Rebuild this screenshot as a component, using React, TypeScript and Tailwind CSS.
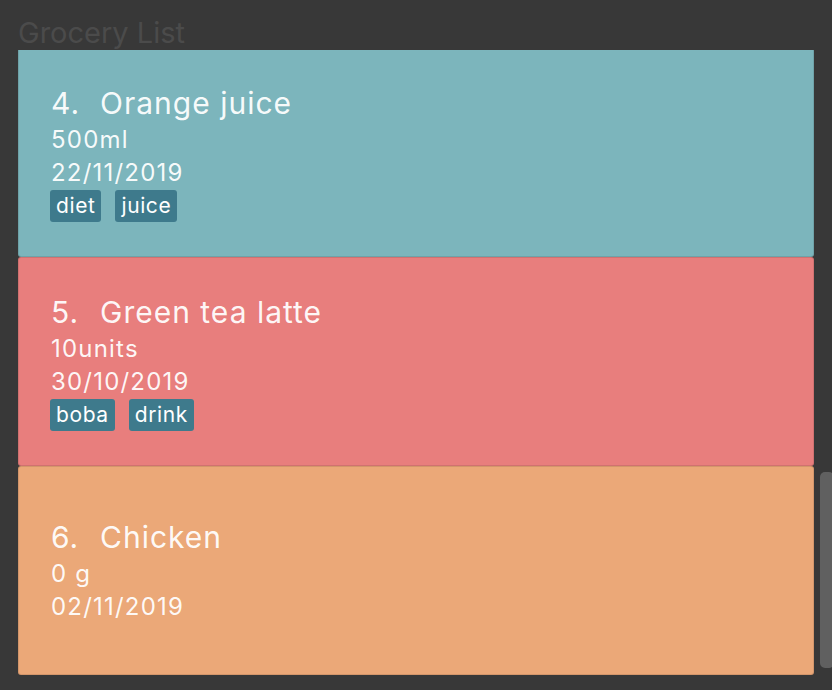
import React from "react";

type Item = {
  n: number;
  name: string;
  qty: string;
  date: string;
  tags: string[];
  bg: string;
};

const items: Item[] = [
  { n: 4, name: "Orange juice", qty: "500ml", date: "22/11/2019", tags: ["diet", "juice"], bg: "bg-[#7cb5bc]" },
  { n: 5, name: "Green tea latte", qty: "10units", date: "30/10/2019", tags: ["boba", "drink"], bg: "bg-[#e87e7d]" },
  { n: 6, name: "Chicken", qty: "0 g", date: "02/11/2019", tags: [], bg: "bg-[#eba878]" },
];

function Card({ it }: { it: Item }) {
  return (
    <div
      className={`${it.bg} h-[209px] shrink-0 rounded-[3px] border border-black/10 flex flex-col justify-center pl-[32px] text-white/95`}
    >
      <div className="flex text-[30px] leading-[39px] tracking-[1px]">
        <span className="w-[49px]">{it.n}.</span>
        <span>{it.name}</span>
      </div>
      <div className="text-[24px] leading-[33px] tracking-[1.2px]">{it.qty}</div>
      <div className="text-[24px] leading-[33px] tracking-[1.2px]">{it.date}</div>
      {it.tags.length > 0 && (
        <div className="flex gap-[14px] mt-[1px] -ml-[1px]">
          {it.tags.map((t) => (
            <span
              key={t}
              className="h-[32px] px-[6px] rounded-[3px] bg-[#3e7a8c] text-white text-[21px] leading-[32px] tracking-[0.6px]"
            >
              {t}
            </span>
          ))}
        </div>
      )}
    </div>
  );
}

export default function App() {
  return (
    <div
      className="w-[832px] h-[690px] overflow-hidden bg-[#383838] flex"
      style={{ fontFamily: "Inter, 'Noto Sans', sans-serif" }}
    >
      <div className="w-[796px] shrink-0 ml-[18px] pt-[19px] flex flex-col">
        <div className="h-[31px] overflow-hidden text-[29px] leading-[28px] text-[#4b4b4b]">
          Grocery List
        </div>
        <div className="h-[625px] overflow-hidden">
          <div className="-mt-[2px] flex flex-col">
            {items.map((it) => (
              <Card key={it.n} it={it} />
            ))}
          </div>
        </div>
      </div>
      <div className="ml-[6px] w-[12px] shrink-0 pt-[472px]">
        <div className="h-[196px] w-[14px] rounded-[5px] bg-[#606060]" />
      </div>
    </div>
  );
}
